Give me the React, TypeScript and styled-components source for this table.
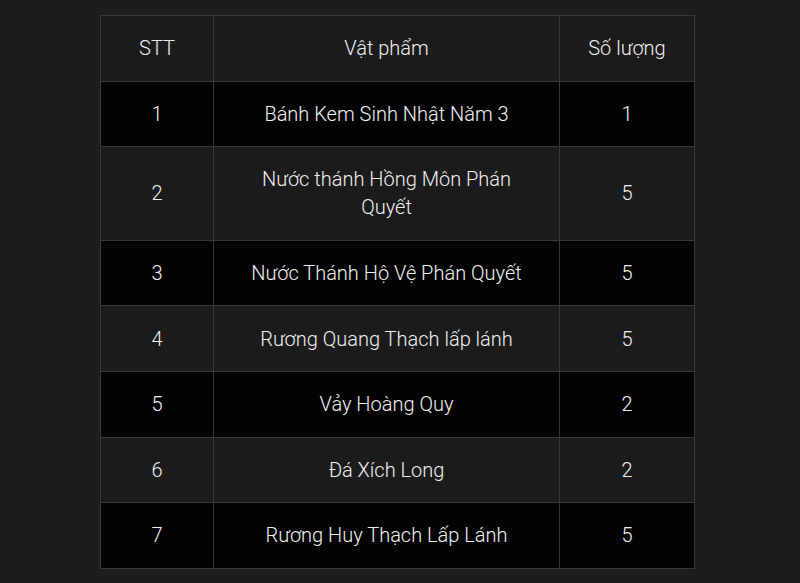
import React from 'react';
import styled, { createGlobalStyle } from 'styled-components';

interface ItemI {
  stt: number;
  name: string;
  qty: number;
}

const items: ItemI[] = [
  { stt: 1, name: 'Bánh Kem Sinh Nhật Năm 3', qty: 1 },
  { stt: 2, name: 'Nước thánh Hồng Môn Phán Quyết', qty: 5 },
  { stt: 3, name: 'Nước Thánh Hộ Vệ Phán Quyết', qty: 5 },
  { stt: 4, name: 'Rương Quang Thạch lấp lánh', qty: 5 },
  { stt: 5, name: 'Vảy Hoàng Quy', qty: 2 },
  { stt: 6, name: 'Đá Xích Long', qty: 2 },
  { stt: 7, name: 'Rương Huy Thạch Lấp Lánh', qty: 5 },
];

const GlobalStyle = createGlobalStyle`
  html, body {
    margin: 0;
    padding: 0;
    background: #1d1d1f;
  }
  body {
    font-family: Roboto, "Liberation Sans", sans-serif;
  }
`;

const Page = styled.div`
  width: 800px;
  height: 583px;
  padding: 15px 0 0 100px;
  box-sizing: border-box;
  background: #1d1d1f;
`;

const Table = styled.table`
  border-collapse: collapse;
  table-layout: fixed;
  width: 594px;
  color: #f0f0f0;
  font-size: 20px;
  font-weight: 300;
  line-height: 28px;
`;

const Row = styled.tr<{ $dark: boolean }>`
  background: ${(p) => (p.$dark ? '#030303' : '#1b1b1b')};
`;

const Cell = styled.td`
  border: 1px solid #383838;
  padding: 18.3px 24px;
  text-align: center;
  vertical-align: middle;
`;

const HeadCell = styled(Cell).attrs({ as: 'th' })`
  font-weight: 300;
`;

export default function App() {
  return (
    <>
      <GlobalStyle />
      <Page>
        <Table>
          <colgroup>
            <col style={{ width: 113 }} />
            <col style={{ width: 346 }} />
            <col style={{ width: 135 }} />
          </colgroup>
          <thead>
            <Row $dark={false}>
              <HeadCell>STT</HeadCell>
              <HeadCell>Vật phẩm</HeadCell>
              <HeadCell>Số lượng</HeadCell>
            </Row>
          </thead>
          <tbody>
            {items.map((item, i) => (
              <Row key={item.stt} $dark={i % 2 === 0}>
                <Cell>{item.stt}</Cell>
                <Cell>{item.name}</Cell>
                <Cell>{item.qty}</Cell>
              </Row>
            ))}
          </tbody>
        </Table>
      </Page>
    </>
  );
}
